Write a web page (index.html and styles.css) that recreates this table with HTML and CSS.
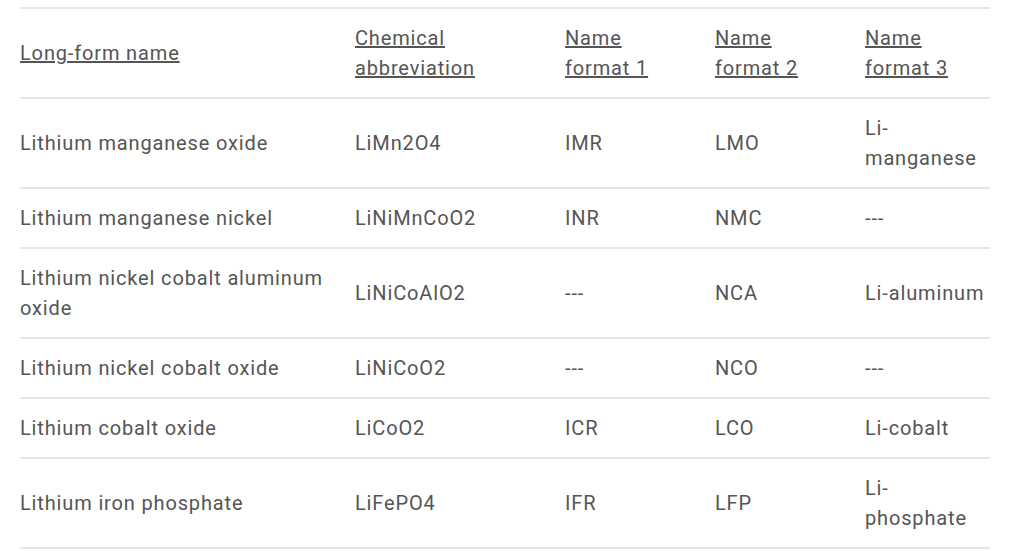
FILE: index.html
```html
<!DOCTYPE html>
<html lang="en">
<head>
<meta charset="utf-8">
<title>Battery chemistry names</title>
<link rel="stylesheet" href="styles.css">
</head>
<body>
<div class="wrap">
<table class="chem">
  <colgroup>
    <col class="c1"><col class="c2"><col class="c3"><col class="c4"><col class="c5">
  </colgroup>
  <thead>
    <tr>
      <th><a href="#">Long-form name</a></th>
      <th><a href="#">Chemical abbreviation</a></th>
      <th><a href="#">Name format 1</a></th>
      <th><a href="#">Name format 2</a></th>
      <th><a href="#">Name format 3</a></th>
    </tr>
  </thead>
  <tbody>
    <tr><td>Lithium manganese oxide</td><td>LiMn2O4</td><td>IMR</td><td>LMO</td><td>Li-manganese</td></tr>
    <tr><td>Lithium manganese nickel</td><td>LiNiMnCoO2</td><td>INR</td><td>NMC</td><td>---</td></tr>
    <tr><td>Lithium nickel cobalt aluminum oxide</td><td>LiNiCoAlO2</td><td>---</td><td>NCA</td><td>Li-aluminum</td></tr>
    <tr><td>Lithium nickel cobalt oxide</td><td>LiNiCoO2</td><td>---</td><td>NCO</td><td>---</td></tr>
    <tr><td>Lithium cobalt oxide</td><td>LiCoO2</td><td>ICR</td><td>LCO</td><td>Li-cobalt</td></tr>
    <tr><td>Lithium iron phosphate</td><td>LiFePO4</td><td>IFR</td><td>LFP</td><td>Li-phosphate</td></tr>
  </tbody>
</table>
</div>
</body>
</html>
```

FILE: styles.css
```css
html, body {
  margin: 0;
  padding: 0;
  background: #ffffff;
}

body {
  font-family: Roboto, "Liberation Sans", sans-serif;
  font-size: 20px;
  letter-spacing: 0.85px;
  line-height: 30px;
  color: #555555;
}

.wrap {
  padding: 7px 34px 0 20px;
}

.chem {
  width: 970px;
  border-collapse: collapse;
  table-layout: fixed;
  border-top: 2px solid #e6e6e6;
}

.c1 { width: 335px; }
.c2 { width: 210px; }
.c3 { width: 150px; }
.c4 { width: 150px; }
.c5 { width: 125px; }

.chem th,
.chem td {
  text-align: left;
  vertical-align: middle;
  font-weight: 400;
  padding: 14px 28px 14px 0;
  border-bottom: 2px solid #e6e6e6;
}

.chem td:last-child,
.chem th:last-child {
  padding-right: 3px;
}

.chem th a {
  color: #555555;
  text-decoration: underline;
}
```
